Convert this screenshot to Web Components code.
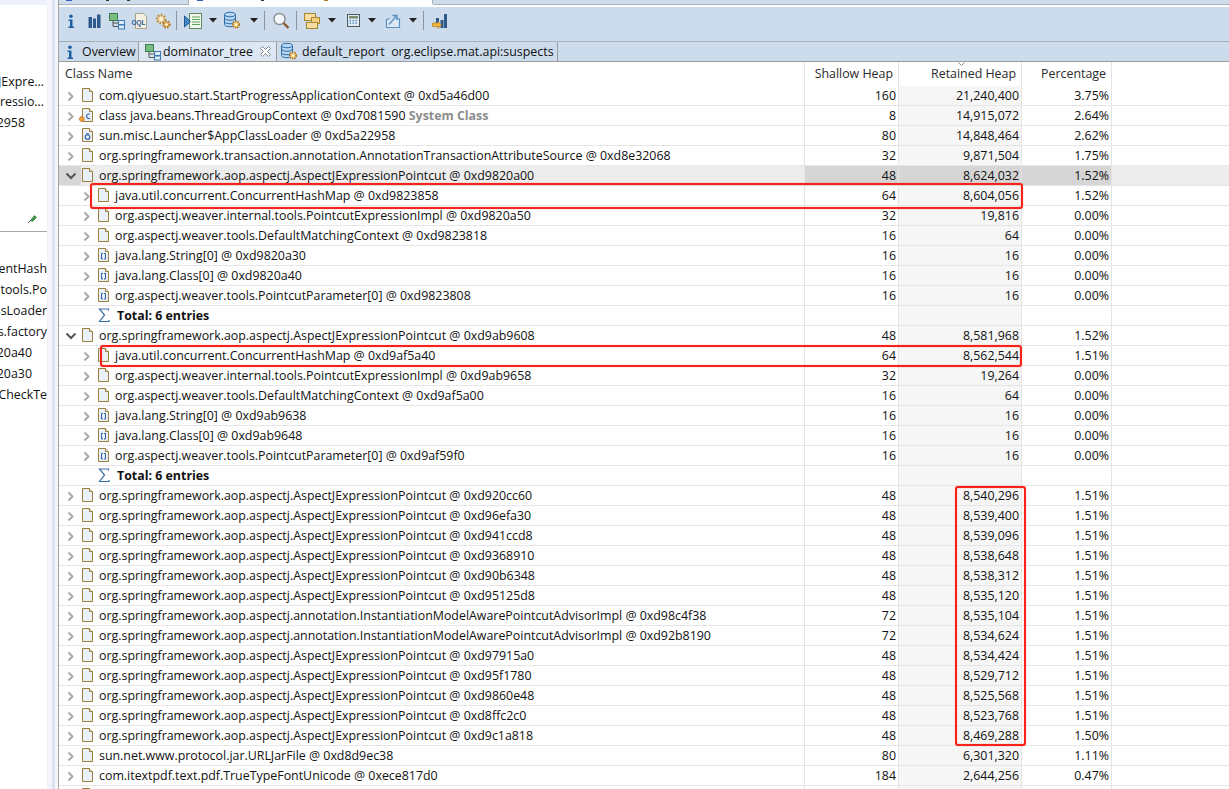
<!DOCTYPE html>
<html><head><meta charset="utf-8">
<style>
html,body{margin:0;padding:0;height:789px;overflow:hidden;background:#fff;font:12.4px "Open Sans",sans-serif;color:#111}
</style></head><body>
<script>
const PAGE='<path d="M2.500 1.500h7l3 3v10h-10z" fill="#e9f0fa" stroke="#9a7f3a"/><path d="M9.500 1.500v3h3" fill="#f6efd6" stroke="#9a7f3a"/>';
const ICONS={
file:[16,16,PAGE],
cls:[16,16,PAGE+'<path d="M9.800 7.200a2.300 2.300 0 1 0 0 4.200" fill="none" stroke="#2b5d9b" stroke-width="1.100"/><circle cx="1.800" cy="12" r="2.400" fill="#f2a33c" stroke="#c9701c" stroke-width=".8"/>'],
loader:[16,16,PAGE+'<circle cx="7.500" cy="10" r="2.300" fill="none" stroke="#2b5d9b" stroke-width="1.100"/><path d="M6 6.800h3" stroke="#2b5d9b"/>'],
arr:[16,16,PAGE+'<path d="M7 6.500h-1.500v5.500h1.500M8 6.500h1.500v5.500h-1.500" fill="none" stroke="#2b5d9b"/>'],
sigma:[16,16,'<path d="M12.500 3.500V2H3.500l5 6-5 6.500H13V13" fill="none" stroke="#3a6ea5" stroke-width="1.200"/>'],
closed:[10,12,'<path d="M2.500 2.500l4 4-4 4" fill="none" stroke="#a9a9a9" stroke-width="2"/>'],
open:[12,10,'<path d="M1.500 2.500l4.500 4.500 4.500-4.500" fill="none" stroke="#555" stroke-width="2"/>'],
info:[16,16,'<circle cx="8" cy="3.200" r="1.800" fill="#1f5fa3"/><path d="M5.500 6.500h4v7h1.500v1.500H5.500v-1.500H7v-5.500H5.500z" fill="#1f5fa3"/>'],
bars:[16,16,'<path d="M2.500 4h3.500v11H2.500zM7 5.500h3V15H7zM11 1.500h3.500V15H11z" fill="#2c5a8c"/>'],
tree:[18,18,'<rect x="1.500" y="1.500" width="8" height="7" fill="#77bd80" stroke="#3f7d4e"/><path d="M5 8.500V14.500H10M5 11h5" fill="none" stroke="#555"/><rect x="10.500" y="8.500" width="6" height="4" fill="#dcebf8" stroke="#3d78b5"/><rect x="10.500" y="13" width="6" height="4" fill="#dcebf8" stroke="#3d78b5"/>'],
oql:[18,18,'<path d="M4.500 1.500h8l3 3v12h-11z" fill="#f4f0e2" stroke="#a9a08a"/><text x="0.500" y="12.500" font-family="Liberation Sans" font-size="6.500" font-weight="700" fill="#2c5a9a">OQL</text>'],
gears:[18,18,'<circle cx="7" cy="7" r="4" fill="#f0dcb0" stroke="#b9924a" stroke-width="2.400" stroke-dasharray="1.800 1.200"/><circle cx="7" cy="7" r="1.600" fill="#fff8e6"/><circle cx="12.500" cy="12.500" r="3" fill="#f6c978" stroke="#a9742a" stroke-width="2.200" stroke-dasharray="1.500 1"/><circle cx="12.500" cy="12.500" r="1.100" fill="#fff8e6"/>'],
run:[20,18,'<rect x="6.500" y="1.500" width="12" height="15" fill="#f2f7ee" stroke="#5c8a5c"/><path d="M9 5h8M9 7.500h8M9 10h8M9 12.500h8" stroke="#5aa35a"/><path d="M1.500 4l6 5.500-6 5.500z" fill="#3f88c5" stroke="#1f5a92"/>'],
db:[20,19,'<path d="M1.500 3.500c0-3 11-3 11 0v10c0 3-11 3-11 0z" fill="#b9d6f0" stroke="#2d6fae"/><path d="M1.500 3.500c0 3 11 3 11 0M1.500 7c0 3 11 3 11 0M1.500 10.500c0 3 11 3 11 0" fill="none" stroke="#2d6fae"/><circle cx="13" cy="13.500" r="3.200" fill="#f7d27c" stroke="#a8752a" stroke-width="1.800" stroke-dasharray="1.400 .9"/><circle cx="13" cy="13.500" r="1" fill="#fff"/>'],
search:[18,18,'<circle cx="7.500" cy="7" r="5.500" fill="#f5f8fb" stroke="#8a8f94" stroke-width="1.400"/><path d="M11.500 11l5 5" stroke="#8b5a2b" stroke-width="2.400"/>'],
copy:[18,18,'<rect x="1.500" y="1.500" width="11" height="7" fill="#f7dea0" stroke="#a8852f"/><rect x="8.500" y="5.500" width="8" height="6" fill="#f3cf80" stroke="#a8852f"/><rect x="3.500" y="10.500" width="11" height="6" fill="#f7dea0" stroke="#a8852f"/>'],
calc:[13,13,'<rect x=".5" y=".5" width="12" height="12" fill="#dfe9f2" stroke="#4c5a5f"/><rect x="2" y="2" width="9" height="2.500" fill="#7a8d6c"/><path d="M2.500 6h1.500v1.200H2.500zM5.500 6h1.500v1.200H5.500zM8.500 6h1.500v1.200H8.500zM2.500 8.500h1.500v1.200H2.500zM5.500 8.500h1.500v1.200H5.500zM8.500 8.500h1.500v1.200H8.500z" fill="#3f7fb8"/>'],
exp:[18,16,'<path d="M2.500 6v8.500h13V6h-3.500M6 6H2.500" fill="#dce8f4" stroke="#5a8fc2" stroke-width="1.200"/><path d="M5 11.500L12 3.500M8.500 2.500h4.500V7" fill="none" stroke="#5a8fc2" stroke-width="1.300"/>'],
barsarrow:[16,16,'<path d="M5 5h3v7H5zM9.500 7h3v8h-3zM13 1h3v14h-3z" fill="#2c5a8c"/><path d="M7 9.500H1.500V13H7v2l3.500-3.500L7 8z" transform="translate(0 .5)" fill="#f2b53c" stroke="#b07a1c" stroke-width=".7"/>'],
drop:[8,5,'<path d="M0 0h8L4 4.500z" fill="#222"/>'],
close:[11,11,'<path d="M.5 2.500l2-2 3 3 3-3 2 2-3 3 3 3-2 2-3-3-3 3-2-2 3-3z" fill="#fff" stroke="#7f8991"/>'],
pin:[10,10,'<path d="M3.500 6.500L7.500 1.500l2 2-4 4z" fill="#3f9a3f" stroke="#1f6b2b" stroke-width=".6"/><path d="M4 6L1 9" stroke="#555"/>']
};
function def(name,tpl){customElements.define(name,class extends HTMLElement{
  connectedCallback(){ if(this.shadowRoot)return; const r=this.attachShadow({mode:'open'}); r.innerHTML=tpl;} });}
class MatIcon extends HTMLElement{connectedCallback(){ if(this.shadowRoot)return;
  const r=this.attachShadow({mode:'open'});const [w,h,b]=ICONS[this.getAttribute('name')];
  r.innerHTML=`<style>:host{display:inline-flex;flex:none}svg{display:block;overflow:visible}</style><svg width="${w}" height="${h}" viewBox="0 0 ${w} ${h}">${b}</svg>`;}}
customElements.define('mat-icon',MatIcon);

def('mat-app',`<style>:host{display:flex;height:789px;overflow:hidden}
 .gut{flex:0 0 10px;display:flex}.gut i{display:block}.gut i:nth-child(1){width:4px;background:#f3f5fa}.gut i:nth-child(2){width:3px;background:#dbe2f1}.gut i:nth-child(3){width:3px;background:#f5f6fa}
 main{flex:1;min-width:0;display:flex;flex-direction:column}</style>
 <slot name="left"></slot><div class="gut"><i></i><i></i><i></i></div><main><slot></slot></main>`);

def('left-panel',`<style>:host{flex:0 0 48px;width:48px;display:flex;flex-direction:column;overflow:hidden;background:#fff;box-sizing:border-box;border-right:1px solid #f1f3f8}
 .top{height:5px;background:#eef1f9;flex:none}
 .a{height:227px;flex:none;border-bottom:1px solid #a9a9a9;display:flex;flex-direction:column;position:relative;box-sizing:border-box;padding-top:66px}
 .b{padding-top:26px;display:flex;flex-direction:column}
 .pin{position:absolute;right:10px;bottom:7px}</style>
 <div class="top"></div><div class="a"><slot name="a"></slot><mat-icon class="pin" name="pin"></mat-icon></div><div class="b"><slot name="b"></slot></div>`);
def('clip-line',`<style>:host{display:flex;justify-content:flex-end;white-space:nowrap;height:21px;line-height:21px;overflow:hidden}span{flex:none}</style><span><slot></slot></span>`);

def('top-strip',`<style>:host{display:flex;height:7px;flex:none;background:#fff;overflow:hidden;border-left:1px solid #a3a3a3;box-sizing:border-box}
 .t{height:4px;border-right:1px solid #a8b0ba;border-bottom:1px solid #a8b0ba;background:#cfdcec;flex:none;display:flex;gap:0;position:relative}
 .t.one{width:129px}.t.act{width:243px;background:#fff;border-bottom:0}.t.rest{flex:1;border-right:0;border-bottom:1px solid #a8b0ba}
 .f{position:absolute;top:0;height:1px;width:6px;background:#2f62b8}.g{background:#b07a2c;width:4px}.k{background:#333;width:3px}</style>
 <div class="t one"><i class="f" style="left:7px"></i><i class="f k" style="left:47px"></i><i class="f k" style="left:68px"></i></div>
 <div class="t act"><i class="f" style="left:8px"></i><i class="f k" style="left:72px"></i><i class="f g" style="left:135px"></i></div>
 <div class="t rest"></div>`);

def('tool-bar',`<style>:host{display:flex;height:34px;flex:none;background:#cddcec;border-left:1px solid #a3a3a3;box-sizing:border-box;padding-bottom:7px;align-items:stretch}</style><slot></slot>`);
class ToolItem extends HTMLElement{connectedCallback(){ if(this.shadowRoot)return;
  const r=this.attachShadow({mode:'open'});const w=this.getAttribute('w'),n=this.getAttribute('name');
  r.innerHTML=`<style>:host{display:flex;flex:0 0 ${w}px;width:${w}px;align-items:center;justify-content:center}.s{width:1px;height:19px;background:#8894a2}</style>`+(n?`<mat-icon name="${n}"></mat-icon>`:`<div class="s"></div>`);}}
customElements.define('tool-item',ToolItem);

def('tab-bar',`<style>:host{display:flex;height:19px;flex:none;background:#cddcec;border-top:1px solid #a8b0ba;border-bottom:1px solid #9b9b9b;border-left:1px solid #a3a3a3;align-items:stretch}</style><slot></slot>`);
class EdTab extends HTMLElement{connectedCallback(){ if(this.shadowRoot)return;
  const r=this.attachShadow({mode:'open'});const w=this.getAttribute('w'),n=this.getAttribute('icon'),cl=this.hasAttribute('closable'),a=this.hasAttribute('active');
  r.innerHTML=`<style>:host{display:flex;flex:0 0 ${w}px;width:${w}px;box-sizing:border-box;align-items:center;white-space:pre;border-right:1px solid #9b9b9b;background:${a?'#dde7f3':'#cddcec'};padding-left:${this.getAttribute('pl')||3}px;line-height:19px;${this.hasAttribute('first')?'border-top-left-radius:4px;':''}}
   .l{margin-left:${this.getAttribute('gap')||4}px}mat-icon[name=close]{margin-left:7px}</style><mat-icon name="${n}"></mat-icon><span class="l"><slot></slot></span>${cl?'<mat-icon name="close"></mat-icon>':''}`;}}
customElements.define('ed-tab',EdTab);

def('heap-table',`<style>:host{display:block;flex:1;min-height:0;position:relative;overflow:hidden;background:#fff;border-left:1px solid #a3a3a3}
 .head{display:grid;grid-template-columns:746px 94px 123px 90px 1fr;height:24px;color:#2a2a2a}
 .head div{border-right:1px solid #e4e4e4;text-align:right;padding-right:5px;line-height:23px;box-sizing:border-box;position:relative}
 .head div:first-child{text-align:left;padding-left:6px}.head div:last-child{border:0}
 .arrow{position:absolute;left:59px;top:0}
 .redbox{position:absolute;border:2px solid #f7231a;border-radius:3px;box-sizing:border-box;pointer-events:none;box-shadow:0 0 1px rgba(247,35,26,.75),inset 0 0 1px rgba(247,35,26,.75)}</style>
 <div class="head"><div>Class Name</div><div>Shallow Heap</div><div>Retained Heap<svg class="arrow" width="7" height="5"><path d="M.5.500l3 3 3-3" fill="none" stroke="#8a8a8a"/></svg></div><div>Percentage</div><div></div></div>
 <slot></slot>
 <div class="redbox" style="left:31px;top:121px;width:933px;height:26px"></div>
 <div class="redbox" style="left:41px;top:283px;width:922px;height:22px"></div>
 <div class="redbox" style="left:896px;top:424px;width:71px;height:260px"></div>`);

class HeapRow extends HTMLElement{connectedCallback(){ if(this.shadowRoot)return;
  const r=this.attachShadow({mode:'open'});const g=k=>this.getAttribute(k)||'';const lv=+g('level'),sel=this.hasAttribute('selected'),ch=g('chev');
  const sum=g('icon')==='sigma';
  r.innerHTML=`<style>:host{display:grid;grid-template-columns:746px 94px 123px 90px 1fr;height:20px;box-sizing:border-box;border-bottom:1px solid #e6e6e6;line-height:19px;${sel?'background:#d6d6d6;':''}}
   .c{box-sizing:border-box;border-right:1px solid #e4e4e4;text-align:right;padding-right:2px;white-space:nowrap}
   .r{background:${sel?'#d6d6d6':'#f6f6f6'}}
   .n{background:${sel?'#ededed':'transparent'};text-align:left;padding:0;display:flex;align-items:center;position:relative;overflow:hidden}
   .e{background:${sel?'#ededed':'transparent'}}
   .ch{flex:0 0 19px;width:19px;height:19px;margin-left:${lv?19:3}px;display:flex;align-items:center;justify-content:center;${sel?'background:#d6d6d6;box-shadow:-3px 0 0 #d6d6d6;':''}}
   .ch mat-icon{margin-left:-2px}
   .ic{margin-left:-1px;margin-top:-1px}
   .t{margin-left:${sum?5:3}px;${sum?'font-weight:700;':''}}
   ::slotted(b){color:#8c8c8c;font-weight:700}</style>
   <div class="c n"><span class="ch">${ch?`<mat-icon name="${ch}"></mat-icon>`:''}</span>${g('icon')?`<mat-icon class="ic" name="${g('icon')}"></mat-icon>`:''}<span class="t"><slot></slot></span></div>
   <div class="c">${g('s')}</div><div class="c r">${g('r')}</div><div class="c">${g('p')}</div><div class="e"></div>`;}}
customElements.define('heap-row',HeapRow);
</script>

<mat-app>
 <left-panel slot="left">
  <clip-line slot="a" style="margin-right:3px">JExpre…</clip-line><clip-line slot="a" style="margin-right:3px;height:20px;line-height:20px">ressio…</clip-line><clip-line slot="a" style="margin-right:22px">2958</clip-line>
  <clip-line slot="b">entHash</clip-line><clip-line slot="b">tools.Po</clip-line><clip-line slot="b">ssLoader</clip-line><clip-line slot="b">s.factory</clip-line>
  <clip-line slot="b" style="margin-right:15px">20a40</clip-line><clip-line slot="b" style="margin-right:15px">20a30</clip-line><clip-line slot="b">CheckTe</clip-line>
 </left-panel>
 <top-strip></top-strip>
 <tool-bar>
  <tool-item w="23" name="info"></tool-item><tool-item w="23" name="bars"></tool-item><tool-item w="23" name="tree"></tool-item><tool-item w="23" name="oql"></tool-item><tool-item w="23" name="gears"></tool-item>
  <tool-item w="5"></tool-item><tool-item w="28" name="run"></tool-item><tool-item w="12" name="drop"></tool-item><tool-item w="28" name="db"></tool-item><tool-item w="14" name="drop"></tool-item>
  <tool-item w="6"></tool-item><tool-item w="28" name="search"></tool-item><tool-item w="3"></tool-item><tool-item w="28" name="copy"></tool-item><tool-item w="12" name="drop"></tool-item>
  <tool-item w="30" name="calc"></tool-item><tool-item w="8" name="drop"></tool-item><tool-item w="34" name="exp"></tool-item><tool-item w="6" name="drop"></tool-item><tool-item w="15"></tool-item><tool-item w="16" name="barsarrow"></tool-item>
 </tool-bar>
 <tab-bar>
  <ed-tab w="80" icon="info" first gap="4">Overview</ed-tab>
  <ed-tab w="138" icon="tree" active pl="5" gap="1" closable>dominator_tree</ed-tab>
  <ed-tab w="281" icon="db" pl="3" gap="2">default_report  org.eclipse.mat.api:suspects</ed-tab>
 </tab-bar>
 <heap-table>
  <heap-row level="0" chev="closed" icon="file" s="160" r="21,240,400" p="3.75%">com.qiyuesuo.start.StartProgressApplicationContext @ 0xd5a46d00</heap-row>
  <heap-row level="0" chev="closed" icon="cls" s="8" r="14,915,072" p="2.64%">class java.beans.ThreadGroupContext @ 0xd7081590 <b>System Class</b></heap-row>
  <heap-row level="0" chev="closed" icon="loader" s="80" r="14,848,464" p="2.62%">sun.misc.Launcher$AppClassLoader @ 0xd5a22958</heap-row>
  <heap-row level="0" chev="closed" icon="file" s="32" r="9,871,504" p="1.75%">org.springframework.transaction.annotation.AnnotationTransactionAttributeSource @ 0xd8e32068</heap-row>
  <heap-row level="0" chev="open" icon="file" selected s="48" r="8,624,032" p="1.52%">org.springframework.aop.aspectj.AspectJExpressionPointcut @ 0xd9820a00</heap-row>
  <heap-row level="1" chev="closed" icon="file" s="64" r="8,604,056" p="1.52%">java.util.concurrent.ConcurrentHashMap @ 0xd9823858</heap-row>
  <heap-row level="1" chev="closed" icon="file" s="32" r="19,816" p="0.00%">org.aspectj.weaver.internal.tools.PointcutExpressionImpl @ 0xd9820a50</heap-row>
  <heap-row level="1" chev="closed" icon="file" s="16" r="64" p="0.00%">org.aspectj.weaver.tools.DefaultMatchingContext @ 0xd9823818</heap-row>
  <heap-row level="1" chev="closed" icon="arr" s="16" r="16" p="0.00%">java.lang.String[0] @ 0xd9820a30</heap-row>
  <heap-row level="1" chev="closed" icon="arr" s="16" r="16" p="0.00%">java.lang.Class[0] @ 0xd9820a40</heap-row>
  <heap-row level="1" chev="closed" icon="arr" s="16" r="16" p="0.00%">org.aspectj.weaver.tools.PointcutParameter[0] @ 0xd9823808</heap-row>
  <heap-row level="1" icon="sigma">Total: 6 entries</heap-row>
  <heap-row level="0" chev="open" icon="file" s="48" r="8,581,968" p="1.52%">org.springframework.aop.aspectj.AspectJExpressionPointcut @ 0xd9ab9608</heap-row>
  <heap-row level="1" chev="closed" icon="file" s="64" r="8,562,544" p="1.51%">java.util.concurrent.ConcurrentHashMap @ 0xd9af5a40</heap-row>
  <heap-row level="1" chev="closed" icon="file" s="32" r="19,264" p="0.00%">org.aspectj.weaver.internal.tools.PointcutExpressionImpl @ 0xd9ab9658</heap-row>
  <heap-row level="1" chev="closed" icon="file" s="16" r="64" p="0.00%">org.aspectj.weaver.tools.DefaultMatchingContext @ 0xd9af5a00</heap-row>
  <heap-row level="1" chev="closed" icon="arr" s="16" r="16" p="0.00%">java.lang.String[0] @ 0xd9ab9638</heap-row>
  <heap-row level="1" chev="closed" icon="arr" s="16" r="16" p="0.00%">java.lang.Class[0] @ 0xd9ab9648</heap-row>
  <heap-row level="1" chev="closed" icon="arr" s="16" r="16" p="0.00%">org.aspectj.weaver.tools.PointcutParameter[0] @ 0xd9af59f0</heap-row>
  <heap-row level="1" icon="sigma">Total: 6 entries</heap-row>
  <heap-row level="0" chev="closed" icon="file" s="48" r="8,540,296" p="1.51%">org.springframework.aop.aspectj.AspectJExpressionPointcut @ 0xd920cc60</heap-row>
  <heap-row level="0" chev="closed" icon="file" s="48" r="8,539,400" p="1.51%">org.springframework.aop.aspectj.AspectJExpressionPointcut @ 0xd96efa30</heap-row>
  <heap-row level="0" chev="closed" icon="file" s="48" r="8,539,096" p="1.51%">org.springframework.aop.aspectj.AspectJExpressionPointcut @ 0xd941ccd8</heap-row>
  <heap-row level="0" chev="closed" icon="file" s="48" r="8,538,648" p="1.51%">org.springframework.aop.aspectj.AspectJExpressionPointcut @ 0xd9368910</heap-row>
  <heap-row level="0" chev="closed" icon="file" s="48" r="8,538,312" p="1.51%">org.springframework.aop.aspectj.AspectJExpressionPointcut @ 0xd90b6348</heap-row>
  <heap-row level="0" chev="closed" icon="file" s="48" r="8,535,120" p="1.51%">org.springframework.aop.aspectj.AspectJExpressionPointcut @ 0xd95125d8</heap-row>
  <heap-row level="0" chev="closed" icon="file" s="72" r="8,535,104" p="1.51%">org.springframework.aop.aspectj.annotation.InstantiationModelAwarePointcutAdvisorImpl @ 0xd98c4f38</heap-row>
  <heap-row level="0" chev="closed" icon="file" s="72" r="8,534,624" p="1.51%">org.springframework.aop.aspectj.annotation.InstantiationModelAwarePointcutAdvisorImpl @ 0xd92b8190</heap-row>
  <heap-row level="0" chev="closed" icon="file" s="48" r="8,534,424" p="1.51%">org.springframework.aop.aspectj.AspectJExpressionPointcut @ 0xd97915a0</heap-row>
  <heap-row level="0" chev="closed" icon="file" s="48" r="8,529,712" p="1.51%">org.springframework.aop.aspectj.AspectJExpressionPointcut @ 0xd95f1780</heap-row>
  <heap-row level="0" chev="closed" icon="file" s="48" r="8,525,568" p="1.51%">org.springframework.aop.aspectj.AspectJExpressionPointcut @ 0xd9860e48</heap-row>
  <heap-row level="0" chev="closed" icon="file" s="48" r="8,523,768" p="1.51%">org.springframework.aop.aspectj.AspectJExpressionPointcut @ 0xd8ffc2c0</heap-row>
  <heap-row level="0" chev="closed" icon="file" s="48" r="8,469,288" p="1.50%">org.springframework.aop.aspectj.AspectJExpressionPointcut @ 0xd9c1a818</heap-row>
  <heap-row level="0" chev="closed" icon="file" s="80" r="6,301,320" p="1.11%">sun.net.www.protocol.jar.URLJarFile @ 0xd8d9ec38</heap-row>
  <heap-row level="0" chev="closed" icon="file" s="184" r="2,644,256" p="0.47%">com.itextpdf.text.pdf.TrueTypeFontUnicode @ 0xece817d0</heap-row>
  <heap-row level="0" chev="closed" icon="file"></heap-row>
 </heap-table>
</mat-app>
</body></html>
